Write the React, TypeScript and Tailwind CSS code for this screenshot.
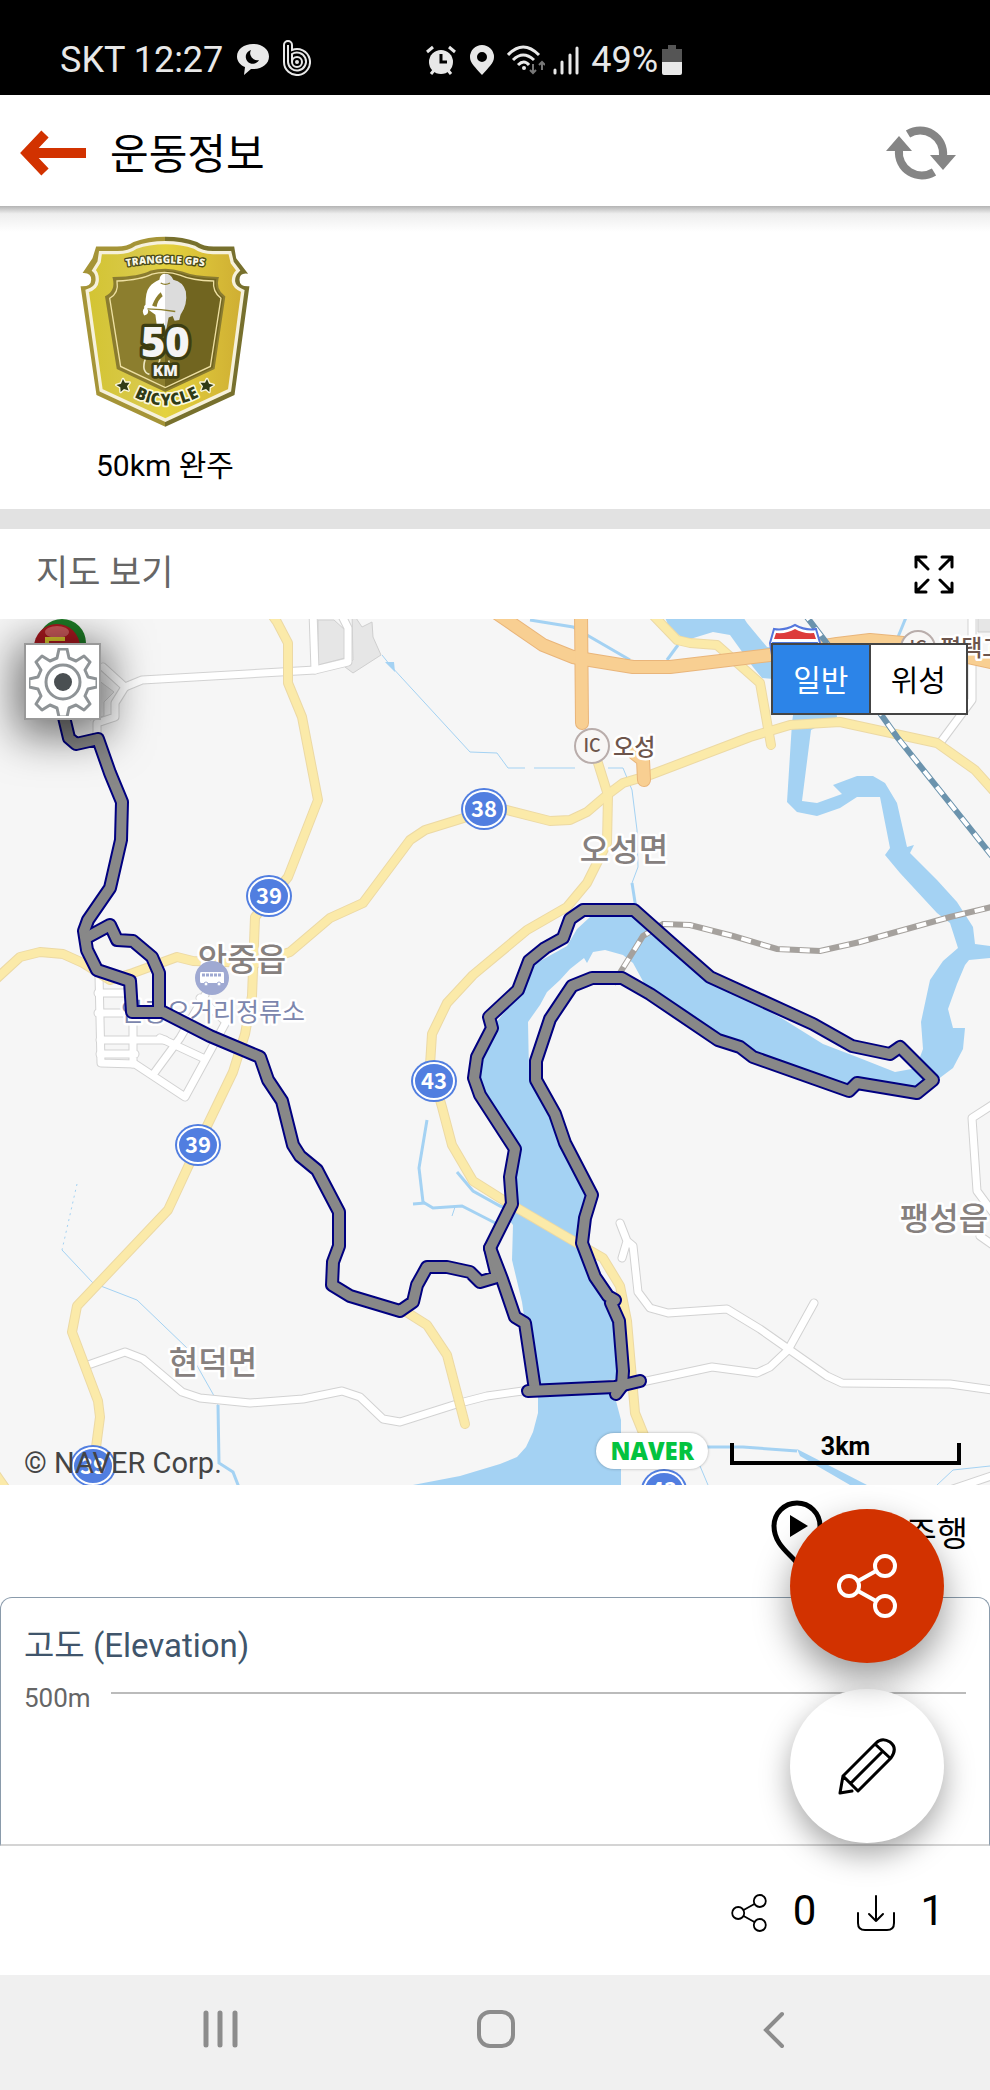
import type { ReactNode } from "react";

const yellowRoads = [
  "M270 612 277 622 288 643 288 683 302 717 318 800 288 877 255 917 252 996 245 1034 233 1072 207 1126 168 1210 77 1306 72 1332 98 1401 100 1417 93 1470",
  "M-5 980 20 957 40 952 63 954 83 963 110 980 133 973 177 957 193 961 257 963 290 952 330 918 363 903 410 840 425 830 467 817 507 810 550 821 570 820 587 812 607 795 623 783 650 775 750 737 790 725 840 722 937 743 975 770 1000 798",
  "M598 763 608 795 607 843 587 883 567 907 527 930 473 975 447 1003 432 1034 430 1065 442 1107 452 1145 473 1181 500 1198 570 1239 603 1258 620 1286 627 1321 635 1413 650 1450",
  "M650 612 677 640 690 643 717 645 760 683 771 745",
  "M400 1308 427 1325 447 1355 465 1424",
  "M-6 1472 8 1492",
];

const orangeRoads = [
  "M495 612 543 645 573 657 590 660 633 667 670 667 770 655 837 644 870 640 903 643 1000 664",
  "M581 612 582 723",
  "M634 753 643 760 644 780",
];

const whiteRoads = [
  "M103 667 125 687 142 680 315 670 348 662 348 628 340 612",
  "M313 612 315 670",
  "M125 687 115 703 115 717 97 723 97 740",
  "M88 1365 125 1352 143 1359 182 1392 200 1398 250 1403 303 1399 342 1391 360 1397 383 1419 400 1422 460 1403 487 1396 530 1390 642 1382 712 1367 757 1373 770 1367 788 1350 814 1303",
  "M620 1223 627 1241 622 1258 627 1241 633 1246 638 1292 650 1308 668 1313 727 1309 760 1329 827 1376 842 1383 950 1384 1000 1391",
  "M1000 1100 972 1118 977 1191 1000 1222",
  "M980 1236 1000 1250",
  "M972 612 972 700 940 743",
  "M950 1490 1000 1473",
  "M99 975 101 1063 135 1064 185 1097 226 1022 200 998",
  "M98 993 130 993 M98 1013 130 1013 M100 1040 165 1040 M100 1054 135 1054 M133 985 133 1064",
  "M155 1072 180 1038 205 995 M160 1038 205 1059",
];

const streams = [
  "M62 1250 93 1283 137 1300 187 1348 213 1394 218 1405",
  "M382 655 390 665 470 752 497 753 508 768 525 768 M534 768 575 768 M608 768 623 768 632 790 637 830 638 867 632 883",
  "M937 1485 953 1470 990 1466",
  "M700 1466 708 1485",
  "M452 1216 455 1207",
];

const wideStreams = [
  "M218 1405 219 1463 233 1472 240 1490",
  "M427 1120 419 1168 423 1202 433 1208 462 1206 505 1228",
  "M413 1204 425 1203",
  "M457 1172 473 1191 500 1206 520 1212",
  "M530 620 573 627 630 660",
  "M678 645 667 660",
  "M907 615 898 637",
  "M632 883 637 915",
  "M700 1447 743 1447 797 1451",
];

const river =
  "M480 1089 477 1057 492 1028 502 1015 523 992 533 965 567 946 577 929 590 917 633 917 647 931 670 950 710 980 783 1019 823 1044 857 1057 895 1072 917 1068 937 1080 917 1093 850 1090 753 1057 718 1040 650 994 633 963 623 955 605 950 593 952 587 963 584 958 570 969 560 980 547 992 540 1005 528 1022 529 1072 555 1114 592 1195 582 1243 610 1300 622 1386 616 1401 621 1420 621 1485 413 1485 460 1476 500 1464 517 1457 526 1447 533 1432 538 1413 538 1397 535 1390 525 1323 522 1302 512 1260 513 1225 503 1212 512 1204 515 1149Z";

const creek =
  "M663 612 670 630 687 640 713 632 730 635 753 667 762 678 785 680 795 700 792 723 787 802 797 812 817 816 840 808 857 797 880 797 890 848 885 855 900 873 937 913 950 923 958 948 943 961 930 980 921 1022 923 1049 917 1065 937 1080 953 1068 963 1049 965 1028 953 1028 948 1009 957 984 965 965 969 960 990 958 990 946 975 944 973 927 957 902 937 880 910 853 914 845 907 847 897 803 885 783 873 776 857 776 833 785 842 794 817 803 802 801 811 730 837 717 830 655 767 647 747 623 740 612Z";

const track = [
  "M63 713 69 738 76 744 98 739 110 773 122 802 121 840 110 888 88 920 84 931 87 950 97 970 130 981 132 1012 163 1012 210 1036 260 1057 268 1080 282 1101 293 1145 300 1156 317 1170 339 1212 339 1246 333 1262 332 1285 350 1296 400 1311 413 1302 417 1285 427 1267 447 1267 470 1272 480 1282 497 1277 490 1248 512 1204 510 1177 515 1149 480 1095 474 1078 477 1057 492 1028 489 1017 518 990 529 961 545 948 563 938 570 919 583 910 634 910 670 942 710 977 813 1024 852 1046 890 1054 900 1047 933 1080 917 1093 857 1083 849 1091 753 1057 740 1047 718 1040 650 994 622 978 592 978 572 986 550 1019 536 1061 536 1080 555 1114 565 1143 592 1195 585 1218 582 1243 595 1277 608 1296 615 1300 611 1303 619 1321 623 1371 622 1386 616 1394",
  "M86 938 110 925 117 940 133 941 152 957 159 973 159 1012",
  "M490 1248 502 1279 515 1317 525 1323 535 1390",
  "M528 1391 615 1387 640 1381",
];

const shields = [
  { n: 38, x: 484, y: 809 },
  { n: 39, x: 269, y: 896 },
  { n: 43, x: 434, y: 1081 },
  { n: 39, x: 198, y: 1145 },
  { n: 39, x: 93, y: 1466 },
  { n: 43, x: 664, y: 1490 },
];

const places = [
  { name: "오성면", x: 624, y: 861 },
  { name: "안중읍", x: 242, y: 971 },
  { name: "현덕면", x: 213, y: 1374 },
  { name: "팽성읍", x: 944, y: 1230 },
];

function Roads({ paths, color, edge, width }: { paths: string[]; color: string; edge: string; width: number }) {
  return (
    <g fill="none" strokeLinecap="round" strokeLinejoin="round">
      {paths.map((d) => (
        <path key={d} d={d} stroke={edge} strokeWidth={width + 2} />
      ))}
      {paths.map((d) => (
        <path key={d} d={d} stroke={color} strokeWidth={width} />
      ))}
    </g>
  );
}

function Rail({ d, color }: { d: string; color: string }) {
  return (
    <g fill="none">
      <path d={d} stroke={color} strokeWidth="6" />
      <path d={d} stroke="#fff" strokeWidth="4" strokeDasharray="10 10" />
    </g>
  );
}

function RouteMap() {
  return (
    <svg viewBox="0 619 990 866" className="block w-full font-['Noto_Sans_CJK_KR',sans-serif]" role="img" aria-label="지도">
      <rect y="619" width="990" height="866" fill="#f6f6f6" />
      <g fill="#e6e6e6" stroke="#cfcfcf">
        <path d="M318 620h16l11 10v28l-27 7z" />
        <path d="M352 612 362 627 372 622 373 637 381 655 353 673 345 667 353 660Z" />
        <path d="M978 612h20v20h-20zM98 680l16 12-10 10v14l-14 4z" />
      </g>
      <g fill="#a4d2f3">
        <path d={creek} />
        <path d={river} />
        <path d="M797 1449 867 1485 850 1485 800 1456zM385 662l9 0 1 10z" />
      </g>
      <g fill="none" stroke="#a4d2f3">
        <path d="M77 1184 62 1250" strokeDasharray="2 4" />
        {streams.map((d) => (
          <path key={d} d={d} strokeWidth="1" />
        ))}
        {wideStreams.map((d) => (
          <path key={d} d={d} strokeWidth="3" />
        ))}
      </g>
      <Roads paths={whiteRoads} color="#fff" edge="#d2d2d2" width={7} />
      <Roads paths={yellowRoads} color="#fbeaa9" edge="#ecd9a4" width={8} />
      <Roads paths={orangeRoads} color="#f8cf92" edge="#e9b57a" width={12} />
      <Rail color="#6b93ad" d="M803 612 880 713 897 737 1000 866" />
      <Rail color="#a5a19d" d="M613 984 643 936 663 924 690 925 733 936 777 949 820 951 860 942 950 917 1000 905" />

      <g strokeWidth="5" stroke="#fff" paintOrder="stroke" strokeLinejoin="round">
        <g fill="#86807e" fontSize="32" fontWeight="500" textAnchor="middle">
          {places.map((p) => (
            <text key={p.name} x={p.x} y={p.y}>{p.name}</text>
          ))}
        </g>
        <text x="213" y="1021" fontSize="25" textAnchor="middle" fill="#7c86ad">안중오거리정류소</text>
        <g fill="#6d554c" fontSize="23" fontWeight="500">
          <text x="613" y="755">오성</text>
          <text x="940" y="656">평택고</text>
        </g>
      </g>
      <g fill="#f8f6f5" stroke="#b9adab" strokeWidth="2">
        <circle cx="592" cy="746" r="17" />
        <circle cx="918" cy="648" r="17" />
      </g>
      <g fill="#6d554c" fontSize="18" fontWeight="500" textAnchor="middle">
        <text x="592" y="752">IC</text>
        <text x="918" y="654">IC</text>
      </g>
      <circle cx="212" cy="978" r="17" fill="#9fa9d2" />
      <path d="M201 972h22q1 0 1 2v9h-23q-1 0-1-2v-7q0-2 1-2z" fill="#fff" />
      <path d="M202 975h19" stroke="#9fa9d2" strokeWidth="3" strokeDasharray="3 1" />
      <g fill="#fff" stroke="#9fa9d2">
        <circle cx="206" cy="984" r="2" />
        <circle cx="219" cy="984" r="2" />
      </g>
      <path d="M774 629q10 2 21-4 11 6 21 4l4 14-4 24h-42l-4-24z" fill="#fff" stroke="#5577dd" strokeWidth="2" />
      <path d="M776 633q11 1 19-4 8 5 19 4l2 6h-42z" fill="#dd3b3b" />
      <path d="M772 642h46l-4 22h-38z" fill="#4a76de" />

      {shields.map((s) => (
        <g key={`${s.x}-${s.y}`}>
          <ellipse cx={s.x} cy={s.y} rx="23" ry="21" fill="#517ee0" />
          <ellipse cx={s.x} cy={s.y} rx="20" ry="18" fill="none" stroke="#fff" strokeWidth="2" />
          <text x={s.x} y={s.y + 8} fill="#fff" fontSize="22" fontWeight="700" textAnchor="middle">{s.n}</text>
        </g>
      ))}

      <circle cx="62" cy="643" r="24" fill="#1c7a25" />
      <circle cx="57" cy="647" r="23" fill="#a8181f" />
      <ellipse cx="57" cy="632" rx="12" ry="6" fill="#c9585a" />
      <path d="M47 643v-4h18" stroke="#dccb2e" strokeWidth="4" fill="none" />

      <g fill="none" strokeLinecap="round" strokeLinejoin="round">
        {track.map((d) => (
          <path key={d} d={d} stroke="#000080" strokeWidth="14" />
        ))}
        {track.map((d) => (
          <path key={d} d={d} stroke="#888" strokeWidth="10" />
        ))}
      </g>
    </svg>
  );
}

function Badge() {
  return (
    <svg viewBox="56 48 518 580" className="h-48 w-[172px]" aria-hidden="true">
      <defs>
        <linearGradient id="gold" x1="0" x2="1">
          <stop offset="0" stopColor="#d3c432" />
          <stop offset=".35" stopColor="#d9c94a" />
          <stop offset=".5" stopColor="#e4d23d" />
          <stop offset="1" stopColor="#cfae33" />
        </linearGradient>
        <linearGradient id="shade" x1="0" x2="1">
          <stop offset=".5" stopColor="#a59437" />
          <stop offset=".5" stopColor="#77702d" />
        </linearGradient>
        <linearGradient id="core" x1="0" x2="1">
          <stop offset=".5" stopColor="#8c7e2e" />
          <stop offset=".5" stopColor="#716520" />
        </linearGradient>
        <linearGradient id="rider" x1="0" x2="1">
          <stop offset=".52" stopColor="#fff" />
          <stop offset=".52" stopColor="#dcdcdc" />
        </linearGradient>
        <path id="arc-top" d="M186 142q130-24 260 0" />
        <path id="arc-bottom" d="M196 518q120 84 248 0" />
      </defs>
      <path
        d="M107 80H170Q200 80 220 66 262 50 316 50T412 66Q432 80 462 80H524L530 115 566 162Q540 158 540 180T570 200L525 528 316 624 108 528 60 200Q92 202 92 180T66 160L96 115Z"
        fill="url(#shade)"
      />
      <path
        d="M120 98H172Q206 98 228 82 266 68 316 68T404 82Q426 98 460 98H511L518 128 536 152Q520 168 522 186T550 214L510 514 316 604 122 514 80 214Q108 206 110 184T100 152L116 126Z"
        fill="url(#gold)"
        stroke="#f6f1dc"
        strokeWidth="10"
      />
      <path
        d="M160 175Q240 172 270 156 292 150 316 150T366 158Q400 172 474 175 464 210 494 232L462 448 316 516 172 448 137 232Q170 215 160 175Z"
        fill="url(#core)"
        stroke="#8a7c30"
        strokeWidth="6"
      />
      <path
        d="M170 184Q244 180 276 163 294 158 316 158T360 166Q396 182 462 184 458 216 484 236L452 442 316 506 181 442 148 236Q176 220 170 184Z"
        fill="none"
        stroke="#eee0a2"
        strokeWidth="4"
      />
      {/* rider */}
      <path
        d="M298 180q2-18 18-18 16 0 24 18 30 6 38 36 6 40-16 70l-4 16-14 2-6-14-12 4-8 40-8-24-18 22-6-46-22-16q2 16-12 18-8-14 0-22-2-6 4-10 0-40 12-54 10-14 30-22zm-22 78q8 4 14 4 2-20 18-32l-6-12q-16 14-26 40z"
        fill="url(#rider)"
      />
      <path d="M302 190q14 8 28 0M262 268q40 0 84 8" stroke="#8c7e2e" strokeWidth="4" fill="none" />
      <path d="M256 418q-14 40 12 48M300 420q-14 50-18 50M326 424q8 40 16 50" stroke="#ece6c0" strokeWidth="5" fill="none" />
      <g fontFamily="Open Sans, sans-serif" fontWeight="800" paintOrder="stroke" strokeLinejoin="round" textAnchor="middle">
        <text x="316" y="413" fontSize="126" fill="#f4f4f4" stroke="#3c3d12" strokeWidth="20">50</text>
        <text x="316" y="472" fontSize="46" fill="#f4f4f4" stroke="#3c3d12" strokeWidth="16">KM</text>
        <text fontSize="31" fill="#f8f6e4" stroke="#4a4a18" strokeWidth="8">
          <textPath href="#arc-top" startOffset="50%">TRANGGLE GPS</textPath>
        </text>
        <text fontSize="50" fill="#303b16" stroke="#fbf8dc" strokeWidth="10">
          <textPath href="#arc-bottom" startOffset="50%">BICYCLE</textPath>
        </text>
      </g>
      <g fill="#303b16" stroke="#fbf8dc" strokeWidth="8" paintOrder="stroke" strokeLinejoin="round">
        <path d="m188 480 6 11 14 0-8 11 5 13-14-5-10 9-1-14-12-7 14-4z" />
        <path d="m442 480-6 11-14 0 8 11-5 13 14-5 10 9 1-14 12-7-14-4z" />
      </g>
    </svg>
  );
}

function StatusBar() {
  return (
    <div className="flex h-[95px] items-center bg-black pt-6 pl-[60px] text-[36px] leading-10 text-[#e8e8e8]">
      <span>SKT 12:27</span>
      <svg viewBox="0 0 32 31" className="ml-[14px] h-[31px] w-8" fill="#e8e8e8">
        <path d="M16 0c9 0 16 5 16 12.500S25 25 16 25l-2 0-7 6 1-8C3 21 0 17 0 12.500 0 5 7 0 16 0z" />
        <path d="M14 6a7 7 0 1 0 8 10A7 7 0 0 1 14 6z" fill="#000" />
      </svg>
      <svg viewBox="0 0 28 36" className="mb-1 ml-[14px] h-9 w-7" fill="none" stroke="#e8e8e8" strokeWidth="2">
        <path d="M1 22V5a4 4 0 0 1 8 0v5a13 13 0 1 1-8 12z" />
        <path d="M5 22V5M5 22a9 9 0 1 0 4-8v8" />
        <circle cx="14" cy="22" r="5" />
        <circle cx="14" cy="22" r="1" />
      </svg>
      <svg viewBox="0 0 30 30" className="ml-[115px] h-[30px] w-[30px]" fill="none" stroke="#e8e8e8" strokeWidth="3">
        <circle cx="15" cy="17" r="12" fill="#e8e8e8" stroke="none" />
        <path d="M1 7l6-5M29 7l-6-5M5 29l4-5M25 29l-4-5" />
        <path d="M15 9v8h6" stroke="#000" />
      </svg>
      <svg viewBox="0 0 24 30" className="ml-[14px] h-[30px] w-6" fill="#e8e8e8">
        <path fillRule="evenodd" d="M12 0a12 12 0 0 1 12 12c0 6-5 10-12 18C5 22 0 18 0 12A12 12 0 0 1 12 0zm0 7a5 5 0 1 0 0 10 5 5 0 0 0 0-10z" />
      </svg>
      <svg viewBox="0 0 38 30" className="ml-[13px] h-[30px] w-[38px]" fill="none" stroke="#e8e8e8" strokeWidth="3">
        <path d="M1 10q15-16 31 0M6 15q10-10 21 0M11 20q6-6 11 0" />
        <circle cx="17" cy="23" r="2" fill="#e8e8e8" stroke="none" />
        <path d="M26 19v9M23 25l3 3 3-3M35 25v-8M32 20l3-3 3 3" stroke="#777" strokeWidth="2" />
      </svg>
      <svg viewBox="0 0 26 30" className="ml-2 h-[30px] w-[26px]" stroke="#e8e8e8" strokeWidth="3" strokeLinecap="round">
        <path d="M2 25v3M9 17v11M17 10v18M24 3v25" />
      </svg>
      <span className="ml-3">49%</span>
      <svg viewBox="0 0 20 30" className="ml-1 h-[30px] w-5">
        <path d="M6 0h8v4h6v14H0V4h6z" fill="#555" />
        <path d="M0 17h20v11q0 2-2 2H2q-2 0-2-2z" fill="#e8e8e8" />
      </svg>
    </div>
  );
}

function ShareIcon({ className, strokeWidth }: { className: string; strokeWidth: number }) {
  return (
    <svg viewBox="0 0 60 64" className={className} fill="none" stroke="currentColor" strokeWidth={strokeWidth}>
      <circle cx="12" cy="32" r="10" />
      <circle cx="48" cy="12" r="10" />
      <circle cx="48" cy="52" r="10" />
      <path d="M21 27l18-10M21 37l18 10" />
    </svg>
  );
}

function NavButton({ label, children }: { label: string; children: ReactNode }) {
  return (
    <button aria-label={label} className="flex w-[277px] justify-center">
      <svg viewBox="0 0 40 40" className="size-10" fill="none" stroke="#8c8c8c" strokeWidth="5" strokeLinecap="round">
        {children}
      </svg>
    </button>
  );
}

export default function App() {
  return (
    <main className="bg-white font-[Roboto,'Noto_Sans_CJK_KR',sans-serif] text-black">
      <StatusBar />

      <header className="flex h-[111px] items-center px-5 pt-2">
        <button aria-label="뒤로" className="mb-1">
          <svg viewBox="0 0 66 46" className="h-[46px] w-[66px]" fill="none" stroke="#d23200" strokeWidth="10">
            <path d="M66 23H8M25 4L7 23l18 19" />
          </svg>
        </button>
        <h1 className="ml-6 text-[42px] leading-[56px]">운동정보</h1>
        <button aria-label="새로고침" className="mr-[14px] mb-1 ml-auto">
          <svg viewBox="0 0 70 56" className="h-14 w-[70px]" fill="none" stroke="#858585" strokeWidth="8">
            <path d="M22 9a23 23 0 0 1 35 22M48 47A23 23 0 0 1 13 25" />
            <path d="M44 30h26L57 45zM0 26h26L13 11z" fill="#858585" stroke="none" />
          </svg>
        </button>
      </header>
      <div className="h-[26px] bg-linear-to-b from-[#b4b4b4] via-[#eee] via-30% to-white" />

      <section className="flex h-[277px] px-[72px] pt-1">
        <figure className="flex flex-col items-center">
          <Badge />
          <figcaption className="mt-[18px] px-6 text-[30px] leading-10">50km 완주</figcaption>
        </figure>
      </section>

      <section className="border-t-20 border-[#e2e2e2]">
        <div className="flex h-[90px] items-center justify-between px-9">
          <h2 className="text-[35px] leading-10 text-[#666]">지도 보기</h2>
          <button aria-label="전체 화면">
            <svg viewBox="0 0 40 40" className="size-10" fill="none" stroke="#000" strokeWidth="3" strokeLinecap="round" strokeLinejoin="round">
              <path d="M2 13V3h10M2 3l12 12M28 3h10v10M38 3L26 15M2 29v9h10M2 38l12-12M28 38h10v-9M38 38L26 26" />
            </svg>
          </button>
        </div>

        <div className="relative overflow-hidden">
          <RouteMap />
          <button
            aria-label="지도 설정"
            className="absolute top-6 left-6 flex size-[77px] items-center justify-center border-2 border-[#999] bg-white shadow-[0_8px_44px_8px_rgba(0,0,0,0.55)]"
          >
            <svg viewBox="0 0 68 68" className="size-[68px]" fill="none" stroke="#8e9396" strokeWidth="3" strokeLinejoin="round">
              <path d="M28 10l2-9h8l2 9 7 3 8-5 6 6-5 8 3 7 9 2v8l-9 2-3 7 5 8-6 6-8-5-7 3-2 9h-8l-2-9-7-3-8 5-6-6 5-8-3-7-9-2v-8l9-2 3-7-5-8 6-6 8 5z" />
              <circle cx="34" cy="34" r="17" />
              <circle cx="34" cy="34" r="9" fill="#4a4f52" stroke="none" />
            </svg>
          </button>
          <div className="absolute top-6 right-[22px] flex h-[72px] w-[197px] border-2 border-[#444] text-[30px] leading-10">
            <button className="flex-1 border-r-2 border-[#444] bg-[#2c84e8] pt-1 text-white">일반</button>
            <button className="flex-1 bg-white pt-1">위성</button>
          </div>
          <p className="absolute bottom-1 left-6 text-[29px] leading-9 text-[#444]">© NAVER Corp.</p>
          <div className="absolute right-[21px] bottom-4 flex items-end gap-[22px] pr-2">
            <span className="rounded-full bg-white px-[14px] font-['Open_Sans',sans-serif] text-[24px] leading-9 font-extrabold text-[#03c340] shadow-[0_0_3px_rgba(0,0,0,0.3)]">
              NAVER
            </span>
            <span className="mb-1 flex h-[22px] w-[231px] items-end justify-center border-4 border-t-0 border-black text-[25px] leading-7 font-bold">3km</span>
          </div>
        </div>
      </section>

      <section className="relative">
        <div className="flex h-28 items-start justify-end px-[22px] pt-[15px]">
          <button className="flex items-start gap-5 text-[34px] leading-[68px]">
            <svg viewBox="0 0 52 66" className="h-[66px] w-[52px]" fill="none" stroke="#000" strokeWidth="5">
              <path d="M26 63C18 53 3 44 3 26a23 23 0 0 1 46 0c0 18-15 27-23 37z" />
              <path d="M19 15v22l18-11z" fill="#000" stroke="none" />
            </svg>
            모의주행
          </button>
        </div>
        <div className="h-[249px] rounded-t-xl border border-b-2 border-[#8a9bab] border-b-[#d4d4d4] px-[23px] pt-7">
          <h2 className="text-[33px] leading-10 text-[#40556b]">고도 (Elevation)</h2>
          <div className="mt-[14px] flex items-start gap-5 text-[26px] leading-9 text-[#666]">
            500m
            <hr className="mt-3 flex-1 border-t-2 border-[#bbb]" />
          </div>
        </div>
        <div className="absolute right-[46px] bottom-[3px] flex flex-col gap-[26px]">
          <button aria-label="공유" className="relative z-10 flex size-[154px] items-center justify-center rounded-full bg-[#d23200] text-white shadow-[0_16px_36px_rgba(0,0,0,0.4)]">
            <ShareIcon className="h-16 w-15" strokeWidth={4} />
          </button>
          <button aria-label="수정" className="flex size-[154px] items-center justify-center rounded-full bg-white shadow-[0_12px_30px_rgba(0,0,0,0.35)]">
            <svg viewBox="0 0 60 60" className="size-15" fill="none" stroke="#000" strokeWidth="3" strokeLinejoin="round" strokeLinecap="round">
              <path d="M6 40L39 7q6-6 14-1 8 6 1 16L21 55zM6 40L3 57l12-2M6 40l15 15M38 8l15 14M14 47l31-31" />
            </svg>
          </button>
        </div>
      </section>

      <footer className="flex h-[129px] items-center justify-end gap-7 pr-[46px] text-[42px] leading-[50px]">
        <button aria-label="공유 수" className="flex items-center gap-[26px]">
          <ShareIcon className="mt-1 h-10 w-9" strokeWidth={3} />
          0
        </button>
        <button aria-label="다운로드 수" className="ml-3 flex items-center gap-6">
          <svg viewBox="0 0 40 40" className="mt-1 size-10" fill="none" stroke="#000" strokeWidth="2" strokeLinecap="round" strokeLinejoin="round">
            <path d="M2 20v10q0 7 7 7h22q7 0 7-7V20M20 3v25M13 21l7 7 7-7" />
          </svg>
          1
        </button>
      </footer>

      <nav className="flex h-[115px] items-center justify-center bg-[#f0f0f0] pb-2 pl-1">
        <NavButton label="최근 앱">
          <path d="M6 4v32M20 4v32M35 4v32" />
        </NavButton>
        <NavButton label="홈">
          <rect x="2" y="3" width="34" height="34" rx="11" strokeWidth="4" />
        </NavButton>
        <NavButton label="이전">
          <path d="M28 5L12 21l16 16" strokeWidth="4" />
        </NavButton>
      </nav>
    </main>
  );
}
